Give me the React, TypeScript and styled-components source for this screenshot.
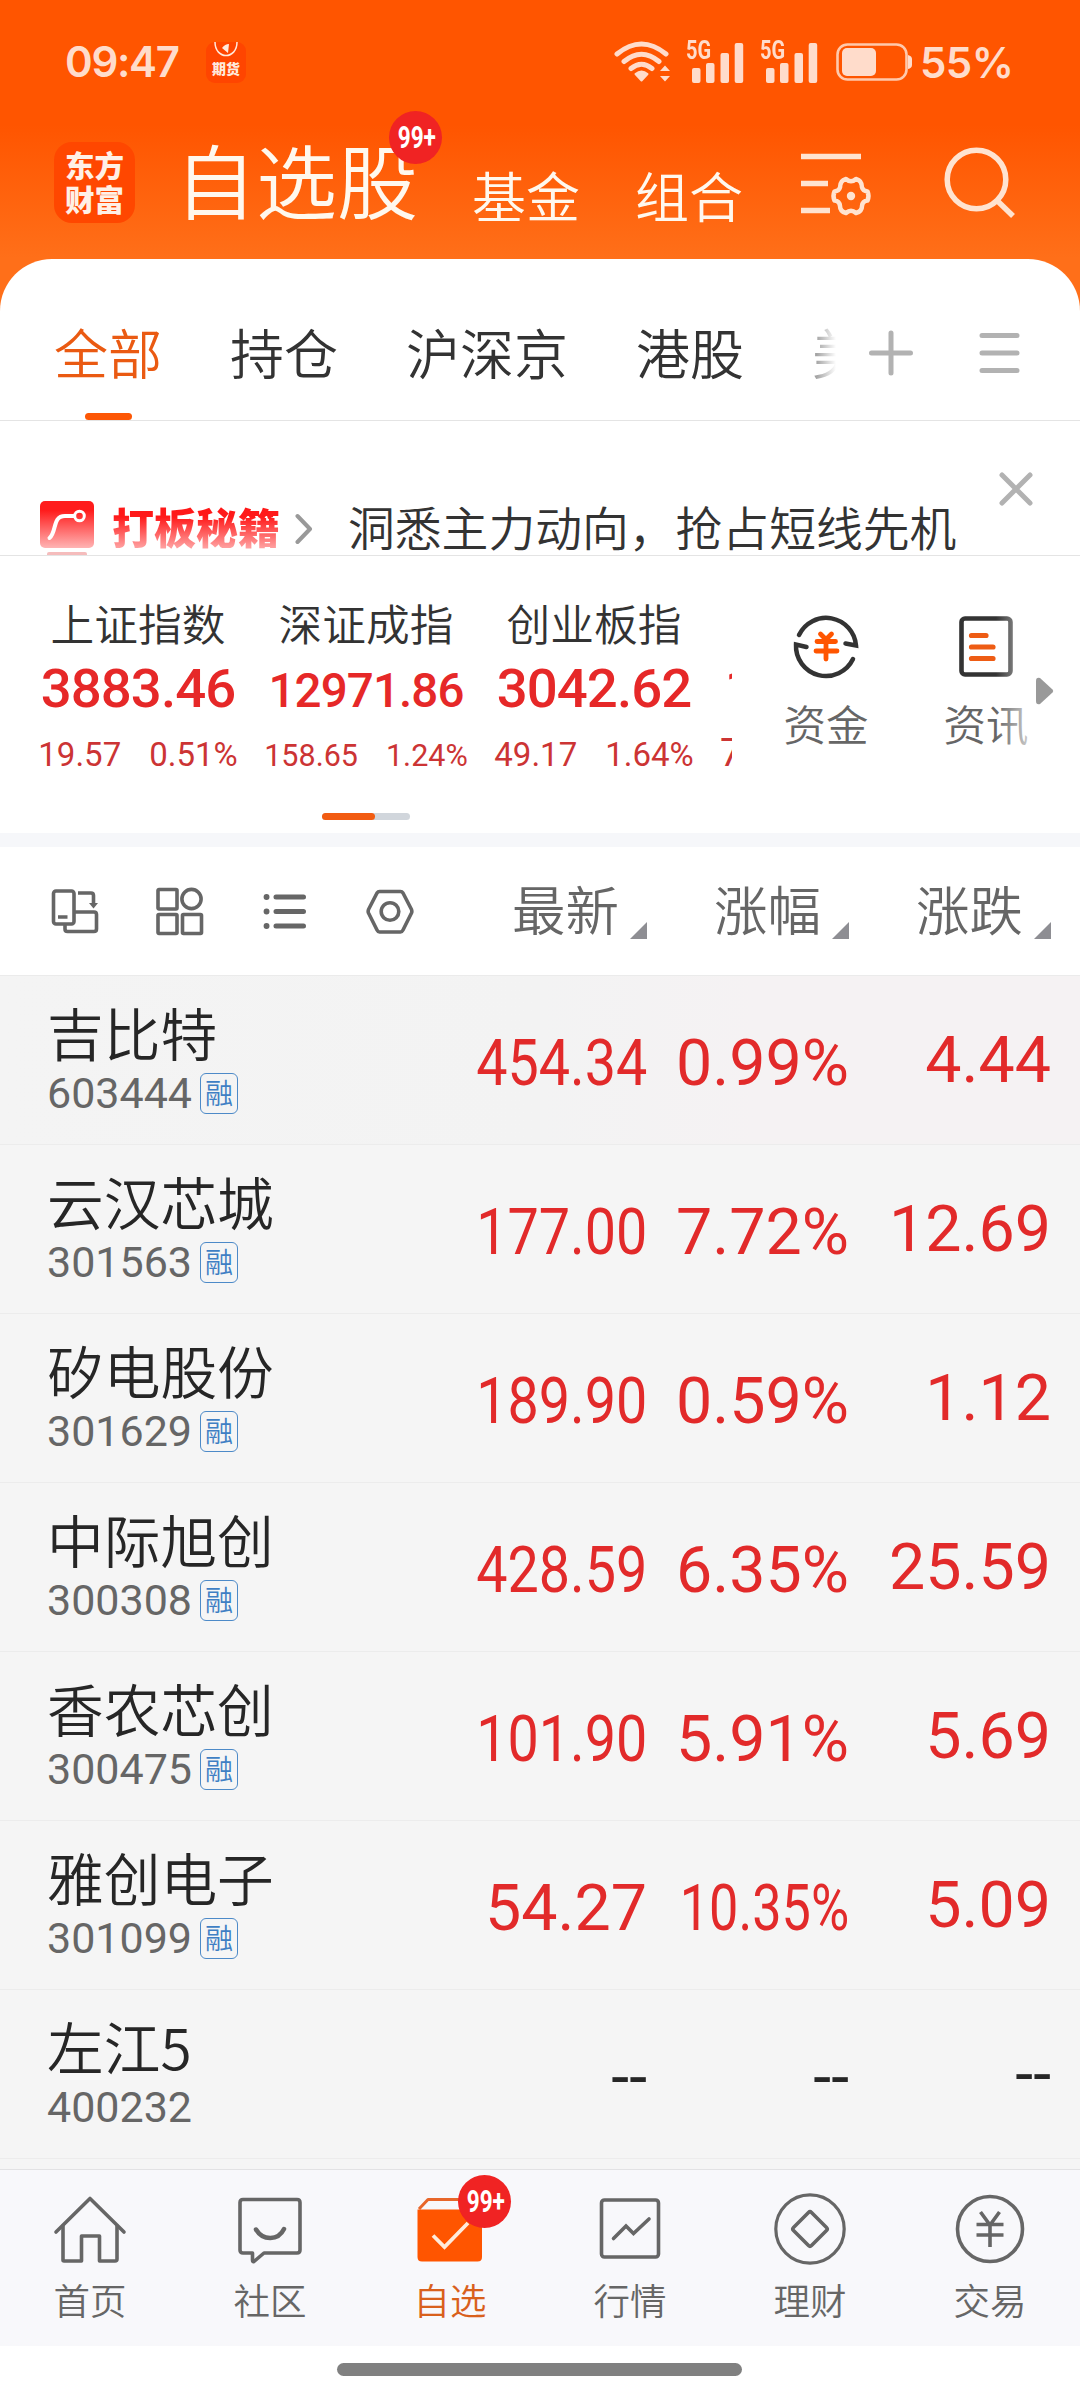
import React from 'react';
import styled, { createGlobalStyle } from 'styled-components';

const cjk = `'Noto Sans CJK SC', sans-serif`;
const latin = `Roboto, 'Noto Sans CJK SC', sans-serif`;

const Global = createGlobalStyle`
  html, body { margin: 0; padding: 0; background: #fff; }
  *, *::before, *::after { box-sizing: border-box; }
  svg { display: block; flex: none; }
`;

const Page = styled.div`
  width: 1080px;
  height: 2400px;
  overflow: hidden;
  display: flex;
  flex-direction: column;
  background: #fff;
  font-family: ${cjk};
  font-weight: 350;
  color: #333;
  white-space: nowrap;
`;

/* Header */
const Header = styled.header`
  height: 311px;
  margin-bottom: -52px;
  flex: none;
  background: linear-gradient(#ff5500 0, #ff5500 125px, #ff6f19 258px, #ff6f19 100%);
`;

const StatusBar = styled.div`
  height: 124px;
  display: flex;
  align-items: center;
  padding: 0 66px 0 65px;
  color: #ffdccb;
`;

const Clock = styled.span`
  font: 600 42px/50px Inter, sans-serif;
  letter-spacing: -1.3px;
  width: 141px;
`;

const FuturesIcon = styled.div`
  width: 40px;
  height: 41px;
  margin-top: 1px;
  border-radius: 9px;
  background: #ff4500;
  color: #ffe9dc;
  display: flex;
  flex-direction: column;
  align-items: center;
  span {
    font: 900 14px/14px ${cjk};
    margin-top: 4px;
  }
`;

const StatusRight = styled.div`
  margin-left: auto;
  display: flex;
  align-items: center;
`;

const Signal = styled.div`
  width: 58px;
  height: 41px;
  margin-right: 16px;
  position: relative;
  b {
    position: absolute;
    left: 0;
    top: -1px;
    font: 700 25px/20px Roboto, sans-serif;
    transform: scaleX(0.8);
    transform-origin: left;
  }
`;

const Percent = styled.span`
  font: 600 42px/50px Inter, sans-serif;
  letter-spacing: -0.6px;
  width: 94px;
  padding-top: 2px;
`;

const TitleBar = styled.div`
  height: 136px;
  display: flex;
  align-items: flex-start;
  padding-left: 54px;
  color: #fff8ee;
`;

const Logo = styled.div`
  width: 81px;
  height: 81px;
  margin-top: 18px;
  border-radius: 18px;
  background: #ff4700;
  display: flex;
  flex-direction: column;
  align-items: center;
  padding-top: 5px;
  font: 900 29.5px/34px ${cjk};
  color: #fff0e6;
`;

const Title = styled.h1`
  margin: 6px 0 0 40px;
  font: 350 81px/96px ${cjk};
  width: 297px;
  position: relative;
`;

const Badge = styled.span<{ $left: number; $top: number }>`
  position: absolute;
  left: ${(p) => p.$left}px;
  top: ${(p) => p.$top}px;
  width: 53px;
  height: 53px;
  border-radius: 50%;
  background: #f02323;
  color: #fff;
  display: flex;
  align-items: center;
  justify-content: center;
  font: 700 30.5px/53px Roboto, sans-serif;
  i {
    font-style: normal;
    transform: translateX(1px) scaleX(0.74);
  }
`;

const HeadLink = styled.span<{ $w: number }>`
  margin-top: 39px;
  width: ${(p) => p.$w}px;
  font: 350 54px/64px ${cjk};
`;

const HeadIcons = styled.div`
  display: flex;
  align-items: center;
  margin-top: 21px;
  gap: 71px;
`;

/* Tabs */
const Panel = styled.main`
  position: relative;
  flex: none;
  background: #fff;
  border-radius: 52px 52px 0 0;
`;

const Tabs = styled.nav`
  height: 162px;
  border-bottom: 1px solid #e4e4e4;
  display: flex;
  padding-left: 54px;
`;

const TabScroll = styled.div`
  width: 782px;
  overflow: hidden;
  display: flex;
  gap: 68px;
  position: relative;
  &::after {
    content: '';
    position: absolute;
    right: 0;
    top: 0;
    width: 44px;
    height: 161px;
    background: linear-gradient(90deg, rgba(255, 255, 255, 0), #fff);
  }
`;

const Tab = styled.span<{ $active?: boolean }>`
  flex: none;
  position: relative;
  font-size: 54px;
  line-height: 64px;
  padding-top: 61px;
  color: ${(p) => (p.$active ? '#ea5a12' : '#333')};
  &::after {
    content: '';
    display: ${(p) => (p.$active ? 'block' : 'none')};
    position: absolute;
    left: 31px;
    bottom: 0;
    width: 47px;
    height: 7px;
    border-radius: 4px;
    background: #fd5705;
  }
`;

const TabActions = styled.div`
  display: flex;
  gap: 60px;
  padding: 69px 0 0 31px;
`;

/* Promo banner */
const Promo = styled.section`
  height: 135px;
  border-bottom: 1px solid #e4e4e4;
  display: flex;
  padding-left: 40px;
  overflow: hidden;
`;

const PromoIcon = styled.svg`
  margin-top: 80px;
`;

const PromoChevron = styled.svg`
  margin-top: 92px;
`;

const PromoClose = styled.svg`
  margin-top: 51px;
`;

const PromoName = styled.span`
  margin: 75px 0 0 18px;
  width: 183px;
  height: 60px;
  font: 900 42px/60px ${cjk};
  background: linear-gradient(#ff1414 0, #ff1a1a 35%, #ff9d9d 85%);
  -webkit-background-clip: text;
  background-clip: text;
  color: transparent;
`;

const PromoText = styled.span`
  margin: 77px 0 0 35px;
  width: 651px;
  font-size: 46.8px;
  line-height: 56px;
`;

/* Index strip */
const IndexStrip = styled.section`
  height: 277px;
  display: flex;
  position: relative;
`;

const IndexScroll = styled.div`
  width: 732px;
  height: 240px;
  padding-left: 24px;
  overflow: hidden;
  display: flex;
`;

const IndexItem = styled.div`
  flex: none;
  width: 228px;
  display: flex;
  flex-direction: column;
  align-items: center;
  padding-top: 38px;
  font-family: ${latin};
`;

const IndexName = styled.span`
  font: 350 43.7px/56px ${cjk};
  height: 56px;
`;

const IndexValue = styled.span<{ $size: number }>`
  font-size: ${(p) => p.$size}px;
  font-weight: 500;
  line-height: 60px;
  height: 60px;
  margin-top: ${(p) => 8 + (54.5 - p.$size) * 0.4}px;
  margin-bottom: ${(p) => -(54.5 - p.$size) * 0.4}px;
  letter-spacing: -0.9px;
  color: #e62828;
`;

const IndexDiff = styled.div<{ $size: number }>`
  display: flex;
  justify-content: center;
  gap: 28px;
  height: 40px;
  font-size: ${(p) => p.$size}px;
  font-weight: 400;
  line-height: 40px;
  margin-top: ${(p) => 17 + (33 - p.$size) * 0.35}px;
  color: #cc3434;
`;

const Pager = styled.div`
  position: absolute;
  left: 322px;
  top: 257px;
  width: 88px;
  height: 7px;
  border-radius: 4px;
  background: #d1d6dc;
  &::after {
    content: '';
    display: block;
    width: 53px;
    height: 7px;
    border-radius: 4px;
    background: #f25c12;
  }
`;

const Shortcuts = styled.div`
  display: flex;
  padding: 56px 0 0 14px;
  width: 296px;
  overflow: hidden;
  position: relative;
  &::after {
    content: '';
    position: absolute;
    right: 0;
    top: 50px;
    width: 32px;
    height: 160px;
    background: linear-gradient(90deg, rgba(255, 255, 255, 0), rgba(255, 255, 255, 0.65));
  }
`;

const Shortcut = styled.div`
  flex: none;
  width: 160px;
  display: flex;
  flex-direction: column;
  align-items: center;
  font-size: 42.5px;
  line-height: 50px;
  color: #666;
  span { margin-top: 16px; }
`;

const MoreArrow = styled.svg`
  margin: 121px 0 0 8px;
`;

const Band = styled.div`
  height: 14px;
  background: #f6f7fa;
`;

/* List */
const Toolbar = styled.div`
  height: 129px;
  display: flex;
  align-items: center;
  padding-left: 49px;
  border-bottom: 1px solid #ebebeb;
  color: #666;
`;

const ToolIcons = styled.div`
  flex: none;
  width: 463px;
  display: flex;
  gap: 55px;
`;

const SortHead = styled.div`
  flex: none;
  width: 202px;
  height: 64px;
  display: flex;
  align-items: flex-start;
  font-size: 53.5px;
  line-height: 58px;
  &::after {
    content: '';
    margin: 43px 0 0 11px;
    width: 17px;
    height: 17px;
    background: #8e8e93;
    clip-path: polygon(100% 0, 100% 100%, 0 100%);
  }
`;

const List = styled.div`
  height: 1193px;
  overflow: hidden;
  background: #f5f5f5;
`;

const Row = styled.div`
  height: 169px;
  border-bottom: 1px solid #ececec;
  display: flex;
  padding-left: 47px;
  font-family: ${latin};
  &:first-child {
    background: linear-gradient(90deg, #f4f4f4, #f3f3f3 50%, #f5f2f3 70%);
  }
`;

const NameCell = styled.div`
  flex: none;
  width: 399px;
  padding-top: 23px;
`;

const StockName = styled.div`
  font: 350 56.7px/64px ${cjk};
  height: 64px;
  color: #262626;
`;

const CodeLine = styled.div`
  display: flex;
  align-items: center;
  font-size: 43px;
  font-weight: 400;
  line-height: 42px;
  margin-top: 9px;
  color: #666;
`;

const Tag = styled.span`
  width: 38px;
  height: 41px;
  margin-left: 8px;
  border: 1px solid #4d8ac8;
  border-radius: 6px;
  font: 350 28px/37px ${cjk};
  text-align: center;
  color: #3f7fc4;
`;

const Num = styled.span<{ $w: number; $sx?: number; $up?: number; $flat?: boolean }>`
  flex: none;
  width: ${(p) => p.$w}px;
  display: flex;
  justify-content: flex-end;
  padding-top: ${(p) => 47 - (p.$up || 0)}px;
  font-size: 64.5px;
  font-weight: 400;
  line-height: 80px;
  color: ${(p) => (p.$flat ? '#262626' : '#e22a2a')};
  i {
    font-style: normal;
    transform: scaleX(${(p) => p.$sx || 1});
    transform-origin: right;
  }
`;

/* Bottom navigation */
const NavBar = styled.nav`
  height: 177px;
  flex: none;
  border-top: 1px solid #e2e2e4;
  background: #f8f8fb;
  display: grid;
  grid-template-columns: repeat(6, 180px);
`;

const NavItem = styled.div<{ $active?: boolean }>`
  position: relative;
  display: flex;
  flex-direction: column;
  align-items: center;
  padding-top: 20px;
  font-size: 36.5px;
  line-height: 44px;
  color: ${(p) => (p.$active ? '#d9601c' : '#666')};
`;

const NavLabel = styled.span`
  margin-top: 12px;
`;

const HomeBar = styled.div`
  width: 405px;
  height: 13px;
  margin: 17px 0 0 337px;
  border-radius: 7px;
  background: #808080;
  flex: none;
`;

const SignalBars = () => (
  <Signal>
    <b>5G</b>
    <svg width="58" height="41" viewBox="0 0 58 41" fill="#ffdccb">
      <rect x="6" y="26" width="8.5" height="15" rx="2" />
      <rect x="20" y="21" width="8.5" height="20" rx="2" />
      <rect x="34.5" y="11" width="8.5" height="30" rx="2" />
      <rect x="48.7" y="1" width="8.5" height="40" rx="2" />
    </svg>
  </Signal>
);

const indexes = [
  { name: '上证指数', value: '3883.46', size: 54.5, diff: '19.57', pct: '0.51%', small: 33 },
  { name: '深证成指', value: '12971.86', size: 47.5, diff: '158.65', pct: '1.24%', small: 30.5 },
  { name: '创业板指', value: '3042.62', size: 54.5, diff: '49.17', pct: '1.64%', small: 33 },
];

const stocks = [
  { name: '吉比特', code: '603444', price: '454.34', pct: '0.99%', chg: '4.44' },
  { name: '云汉芯城', code: '301563', price: '177.00', pct: '7.72%', chg: '12.69' },
  { name: '矽电股份', code: '301629', price: '189.90', pct: '0.59%', chg: '1.12' },
  { name: '中际旭创', code: '300308', price: '428.59', pct: '6.35%', chg: '25.59' },
  { name: '香农芯创', code: '300475', price: '101.90', pct: '5.91%', chg: '5.69' },
  { name: '雅创电子', code: '301099', price: '54.27', pct: '10.35%', chg: '5.09' },
  { name: '左江5', code: '400232', price: '--', pct: '--', chg: '--', flat: true },
];

const stroke = { fill: 'none', stroke: '#666', strokeWidth: 3.6, strokeLinecap: 'round', strokeLinejoin: 'round' } as const;

const navItems = [
  {
    label: '首页',
    icon: (
      <svg width="76" height="76" viewBox="0 0 76 76" {...stroke}>
        <path d="M4 42 38 8.500 72 42" />
        <path d="M11 36V70Q11 71 12 71H29.500V46H47.500V71H63Q65 71 65 69V36" />
      </svg>
    ),
  },
  {
    label: '社区',
    icon: (
      <svg width="76" height="76" viewBox="0 0 76 76" {...stroke}>
        <path d="M11 9.500H65Q68 9.500 68 12.500V60Q68 63 65 63H32L22 71.500Q20.500 72 20.500 70V63H11Q8 63 8 60V12.500Q8 9.500 11 9.500Z" />
        <path d="M24 39.500C31 51 46 51 52 39" strokeWidth="4.500" />
      </svg>
    ),
  },
  {
    label: '自选',
    active: true,
    icon: (
      <svg width="76" height="76" viewBox="0 0 76 76">
        <path d="M7 19 16 9.500H66V19" fill="#f8f8fb" stroke="#e8662a" strokeWidth="3" strokeLinejoin="round" />
        <path d="M5.500 19.500H70V67Q70 71.500 65.500 71.500H10Q5.500 71.500 5.500 67Z" fill="#ff5500" />
        <path d="M21 45.500 32.500 57 56 33" fill="none" stroke="#ffeada" strokeWidth="3.800" />
      </svg>
    ),
  },
  {
    label: '行情',
    icon: (
      <svg width="76" height="76" viewBox="0 0 76 76" {...stroke}>
        <rect x="9.500" y="10" width="57" height="57" rx="3" />
        <path d="M21.500 48.500 34 36 41.500 43.500 57 29" strokeLinejoin="miter" />
      </svg>
    ),
  },
  {
    label: '理财',
    icon: (
      <svg width="76" height="76" viewBox="0 0 76 76" {...stroke}>
        <circle cx="38" cy="39" r="34.200" strokeWidth="3.200" />
        <path d="M36.500 22.500Q38 21 39.500 22.500L54.500 37.500Q56 39 54.500 40.500L39.500 55.500Q38 57 36.500 55.500L21.500 40.500Q20 39 21.500 37.500Z" />
      </svg>
    ),
  },
  {
    label: '交易',
    icon: (
      <svg width="76" height="76" viewBox="0 0 76 76" {...stroke} strokeLinecap="butt">
        <circle cx="38" cy="39" r="32.500" />
        <path d="M28.500 22 38 35 47.500 22M24.500 34.500H51.500M24.500 45H51.500M38 34V57" />
      </svg>
    ),
  },
];

export default function App() {
  return (
    <Page>
      <Global />
      <Header>
        <StatusBar>
          <Clock>09:47</Clock>
          <FuturesIcon>
            <svg width="26" height="15" viewBox="0 0 26 15">
              <path d="M2 0C2 18 24 18 24 0" fill="none" stroke="#ffe9dc" strokeWidth="1.500" />
              <path d="M9 6Q12 2 16 2L15 11ZM9 6 13 10" fill="#ffe9dc" />
            </svg>
            <span>期货</span>
          </FuturesIcon>
          <StatusRight>
            <svg width="72" height="42" viewBox="0 0 72 42" fill="none" stroke="#ffdccb" strokeWidth="5" strokeLinecap="round">
              <path d="M3 13Q27.500-7 52 13M10 20.500Q27.500 6 45 20.500M17 27.500Q27.500 19 38 27.500" />
              <path d="M21.500 33Q27.500 28 33.500 33L27.500 39.500Z" fill="#ffdccb" stroke="#ffdccb" strokeWidth="2" strokeLinejoin="round" />
              <path d="M51 24.500 46 30H56ZM51 40.500 46 35H56Z" fill="#ffdccb" stroke="none" />
            </svg>
            <SignalBars />
            <SignalBars />
            <svg width="86" height="40" viewBox="-2 0 86 40">
              <rect x="1.500" y="2.500" width="69" height="35" rx="10" fill="none" stroke="#ffc9ac" strokeWidth="2.600" />
              <rect x="6" y="6" width="34" height="28" rx="5" fill="#ffdccb" />
              <path d="M72 13Q76 14 76 17V23Q76 26 72 27Z" fill="#ffdccb" />
            </svg>
            <Percent>55%</Percent>
          </StatusRight>
        </StatusBar>
        <TitleBar>
          <Logo>
            <span>东方</span>
            <span>财富</span>
          </Logo>
          <Title>
            自选股
            <Badge $left={214} $top={-19}><i>99+</i></Badge>
          </Title>
          <HeadLink $w={163}>基金</HeadLink>
          <HeadLink $w={166}>组合</HeadLink>
          <HeadIcons>
            <svg width="72" height="74" viewBox="0 0 72 74" fill="none" stroke="#ffe3d0" strokeWidth="5.500">
              <path d="M0 11.500H60M0 38.500H27M0 65.500H29" />
              <path
                d="M45 34Q50 38.500 55 34Q61 35.500 61 42.500Q62 46 66.500 46.500Q68.500 51 66.500 55.500Q61.500 56 61 61Q61 66.500 55 68Q50 63.500 45 68Q39 66.500 39 61Q38.500 56 33.500 55.500Q31.500 51 33.500 46.500Q38 46 39 42.500Q39 35.500 45 34Z"
                strokeWidth="4.500"
                strokeLinejoin="round"
              />
              <circle cx="50" cy="51" r="4.200" fill="#ffe3d0" stroke="none" />
            </svg>
            <svg width="76" height="74" viewBox="0 0 76 74" fill="none" stroke="#ffe3d0" strokeWidth="5.500">
              <circle cx="32.500" cy="34.500" r="29.300" />
              <path d="M53 55.500 69 71" />
            </svg>
          </HeadIcons>
        </TitleBar>
      </Header>

      <Panel>
        <Tabs>
          <TabScroll>
            <Tab $active>全部</Tab>
            <Tab>持仓</Tab>
            <Tab>沪深京</Tab>
            <Tab>港股</Tab>
            <Tab>美</Tab>
          </TabScroll>
          <TabActions>
            <svg width="50" height="50" viewBox="0 0 50 50" stroke="#b2b2b2" strokeWidth="5" strokeLinecap="round">
              <path d="M4.500 25H43.500M24 5V45" />
            </svg>
            <svg width="46" height="50" viewBox="0 0 46 50" stroke="#b2b2b2" strokeWidth="5" strokeLinecap="round">
              <path d="M5 7.500H40M5 25H40M5 42.500H40" />
            </svg>
          </TabActions>
        </Tabs>

        <Promo>
          <PromoIcon width="54" height="56" viewBox="0 0 54 56">
            <defs>
              <linearGradient id="promo" x1="0" y1="0" x2="0" y2="1">
                <stop offset="0.200" stopColor="#ff1c1c" />
                <stop offset="1" stopColor="#ffb4b4" />
              </linearGradient>
            </defs>
            <rect width="54" height="47" rx="5" fill="url(#promo)" />
            <rect x="7" y="51" width="40" height="8" rx="2" fill="#f5bcbc" />
            <path d="M9.500 37C17 31 12 15 25 15H34" fill="none" stroke="#fff" strokeWidth="4" strokeLinecap="round" />
            <circle cx="39.500" cy="15" r="4.800" fill="none" stroke="#fff" strokeWidth="3" />
          </PromoIcon>
          <PromoName>打板秘籍</PromoName>
          <PromoChevron width="18" height="32" viewBox="0 0 18 32" fill="none" stroke="#999" strokeWidth="4" strokeLinecap="round" strokeLinejoin="round">
            <path d="M2.500 3 15 16 2.500 29" />
          </PromoChevron>
          <PromoText>洞悉主力动向，抢占短线先机</PromoText>
          <PromoClose width="34" height="34" viewBox="0 0 34 34" stroke="#b2b2b2" strokeWidth="5" strokeLinecap="round">
            <path d="M3 3 31 31M31 3 3 31" />
          </PromoClose>
        </Promo>

        <IndexStrip>
          <IndexScroll>
            {indexes.map((x) => (
              <IndexItem key={x.name}>
                <IndexName>{x.name}</IndexName>
                <IndexValue $size={x.size}>{x.value}</IndexValue>
                <IndexDiff $size={x.small}>
                  <span>{x.diff}</span>
                  <span>{x.pct}</span>
                </IndexDiff>
              </IndexItem>
            ))}
            <IndexItem>
              <IndexName />
              <IndexValue $size={54.5}>1360.28</IndexValue>
              <IndexDiff $size={38}>
                <span>7.52</span>
                <span>0.56%</span>
              </IndexDiff>
            </IndexItem>
          </IndexScroll>
          <Shortcuts>
            <Shortcut>
              <svg width="70" height="70" viewBox="0 0 70 70" fill="none" stroke="#333" strokeWidth="4.500" strokeLinecap="round" strokeLinejoin="miter">
                <path d="M8 23A30 30 0 0 1 65 33.500L54.500 31.500" />
                <path d="M62 47A30 30 0 0 1 5 32.500L15.500 35" />
                <path d="M29.500 22 35 27.500 40.500 22M26 29.500H44.500M25 39H46M35 28V47" stroke="#ff5500" strokeWidth="4.800" />
              </svg>
              <span>资金</span>
            </Shortcut>
            <Shortcut>
              <svg width="70" height="70" viewBox="0 0 70 70" fill="none" strokeLinecap="round">
                <rect x="10.500" y="6.500" width="49" height="56" rx="3.500" stroke="#333" strokeWidth="4.600" />
                <path d="M20.500 23.500H35M20.500 35H42M20.500 46.500H42" stroke="#ee5c14" strokeWidth="5.200" />
              </svg>
              <span>资讯</span>
            </Shortcut>
          </Shortcuts>
          <MoreArrow width="18" height="28" viewBox="0 0 18 28" fill="#999">
            <path d="M0 4Q0 0 4 1L16.500 12.500Q18 14 16.500 15.500L4 27Q0 28 0 24Z" />
          </MoreArrow>
          <Pager />
        </IndexStrip>
        <Band />

        <Toolbar>
          <ToolIcons>
            <svg width="50" height="50" viewBox="0 0 50 50" {...stroke} strokeLinecap="butt">
              <rect x="4.500" y="5" width="20.500" height="33" rx="2.500" />
              <path d="M9 31H18.500M29 7H42Q44.500 7 44.500 9.500V18M25 26H45Q47.500 26 47.500 28.500V43Q47.500 45.500 45 45.500H18.500Q16 45.500 16 43V38" />
              <path d="M40 17H49L44.500 22.500Z" fill="#666" stroke="none" />
            </svg>
            <svg width="50" height="50" viewBox="0 0 50 50" {...stroke}>
              <rect x="4" y="3.500" width="19" height="19.500" rx="1" />
              <circle cx="37.500" cy="13" r="9.600" />
              <rect x="4" y="28.500" width="19" height="19" rx="1" />
              <rect x="28.500" y="28.500" width="19" height="19" rx="1" />
            </svg>
            <svg width="50" height="50" viewBox="0 0 50 50" fill="none" stroke="#666" strokeWidth="5" strokeLinecap="round">
              <path d="M17 11H44.500M17 25.500H44.500M17 40H44.500" />
              <path d="M7.500 11H7.600M7.500 25.500H7.600M7.500 40H7.600" strokeWidth="5.800" />
            </svg>
            <svg width="50" height="50" viewBox="0 0 50 50" {...stroke}>
              <path d="M15.500 5.500H36.500Q38 5.500 39 7L47.500 23.500Q48.200 25.500 47.500 27L39 44Q38 46 36.500 46H15.500Q14 46 13 44L4.500 27Q3.800 25.500 4.500 23.500L13 7Q14 5.500 15.500 5.500Z" />
              <circle cx="26" cy="25.500" r="8.800" />
            </svg>
          </ToolIcons>
          <SortHead>最新</SortHead>
          <SortHead>涨幅</SortHead>
          <SortHead>涨跌</SortHead>
        </Toolbar>

        <List>
          {stocks.map((s) => (
            <Row key={s.code}>
              <NameCell>
                <StockName>{s.name}</StockName>
                <CodeLine>
                  {s.code}
                  {!s.flat && <Tag>融</Tag>}
                </CodeLine>
              </NameCell>
              <Num $w={201} $sx={s.price.length > 5 ? 0.863 : 1} $flat={s.flat}><i>{s.price}</i></Num>
              <Num $w={202} $sx={s.pct.length > 5 ? 0.81 : 1} $flat={s.flat}><i>{s.pct}</i></Num>
              <Num $w={202} $up={3} $flat={s.flat}><i>{s.chg}</i></Num>
            </Row>
          ))}
        </List>
      </Panel>

      <NavBar>
        {navItems.map((n) => (
          <NavItem key={n.label} $active={n.active}>
            {n.icon}
            <NavLabel>{n.label}</NavLabel>
            {n.active && <Badge $left={98} $top={5}><i>99+</i></Badge>}
          </NavItem>
        ))}
      </NavBar>
      <HomeBar />
    </Page>
  );
}
